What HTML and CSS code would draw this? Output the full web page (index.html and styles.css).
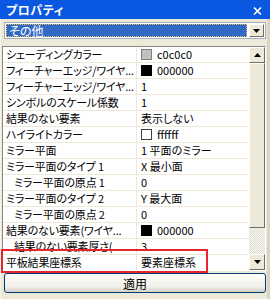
FILE: index.html
```html
<!DOCTYPE html>
<html lang="ja">
<head>
  <meta charset="UTF-8">
  <title>プロパティ</title>
  <link rel="stylesheet" href="styles.css">
</head>
<body>

  <div class="window">
    <!-- タイトルバー -->
    <div class="titlebar">
      <span class="title">プロパティ</span>
      <span class="close">
        <svg width="9" height="8" viewBox="0 0 9 8"><path d="M1 0.5 L8 7.5 M8 0.5 L1 7.5" stroke="#fff" stroke-width="1.6"/></svg>
      </span>
    </div>

    <!-- カテゴリ選択 -->
    <div class="combo">
      <div class="combo-field"><span>その他</span></div>
      <div class="combo-btn">
        <svg width="7" height="4" viewBox="0 0 7 4"><path d="M0 0 H7 L3.5 4 Z" fill="#000"/></svg>
      </div>
    </div>

    <!-- プロパティ一覧 -->
    <div class="grid-box">
      <div class="rows">
        <div class="row"><div class="name">シェーディングカラー</div><div class="value"><i class="swatch silver"></i>c0c0c0</div></div>
        <div class="row"><div class="name">フィーチャーエッジ/ワイヤ...</div><div class="value"><i class="swatch black"></i>000000</div></div>
        <div class="row"><div class="name">フィーチャーエッジ/ワイヤ...</div><div class="value">1</div></div>
        <div class="row"><div class="name">シンボルのスケール係数</div><div class="value">1</div></div>
        <div class="row"><div class="name">結果のない要素</div><div class="value">表示しない</div></div>
        <div class="row"><div class="name">ハイライトカラー</div><div class="value"><i class="swatch white"></i>ffffff</div></div>
        <div class="row"><div class="name">ミラー平面</div><div class="value">1 平面のミラー</div></div>
        <div class="row"><div class="name">ミラー平面のタイプ 1</div><div class="value">X 最小面</div></div>
        <div class="row"><div class="name sub">ミラー平面の原点 1</div><div class="value">0</div></div>
        <div class="row"><div class="name">ミラー平面のタイプ 2</div><div class="value">Y 最大面</div></div>
        <div class="row"><div class="name sub">ミラー平面の原点 2</div><div class="value">0</div></div>
        <div class="row"><div class="name">結果のない要素(ワイヤ...</div><div class="value"><i class="swatch black"></i>000000</div></div>
        <div class="row"><div class="name sub">結果のない要素厚さ(</div><div class="value">3</div></div>
        <div class="row"><div class="name">平板結果座標系</div><div class="value">要素座標系</div></div>
      </div>

      <div class="vscroll">
        <div class="sb-btn">
          <svg width="7" height="4" viewBox="0 0 7 4"><path d="M0 4 H7 L3.5 0 Z" fill="#000"/></svg>
        </div>
        <div class="sb-thumb"></div>
        <div class="sb-track"></div>
        <div class="sb-btn">
          <svg width="7" height="4" viewBox="0 0 7 4"><path d="M0 0 H7 L3.5 4 Z" fill="#000"/></svg>
        </div>
      </div>
    </div>

    <div class="apply-row">
      <button class="apply">適用</button>
    </div>

    <!-- 注目枠 -->
    <div class="highlight"></div>
  </div>

</body>
</html>
```

FILE: styles.css
```css
body {
  margin: 0;
  font-family: "Noto Sans CJK JP", "Noto Sans", sans-serif;
  font-size: 11px;
  font-feature-settings: "palt";
  color: #000;
  background: #ece9d8;
}

.window {
  position: relative;
  width: 270px;
  height: 299px;
  box-sizing: border-box;
  background: #ece9d8;
  border-left: 1px solid #f4f3ee;
  border-right: 3px solid #d8d4c4;
  display: flex;
  flex-direction: column;
}

.titlebar {
  height: 19px;
  margin-left: -1px;
  margin-right: -3px;
  background: #0a58e2;
  color: #fff;
  display: flex;
  align-items: center;
  justify-content: space-between;
  padding: 0 6px 0 6px;
}

.title {
  font-weight: bold;
  font-size: 12px;
  letter-spacing: 0.5px;
}

.close {
  display: flex;
  margin-right: 2px;
  margin-top: 2px;
}

.combo {
  margin: 3px 1px 0 3px;
  height: 17px;
  display: flex;
  background: #fff;
  border: 1px solid #a5acb5;
  box-sizing: border-box;
  padding: 1px;
}

.combo-field {
  flex: 1;
  background: #316ac5;
  border: 1px dotted #e8c060;
  color: #fff;
  display: flex;
  align-items: center;
  padding-left: 2px;
  font-size: 12px;
}

.combo-btn {
  width: 15px;
  margin-left: 2px;
  background: #ece9d8;
  border: 1px solid;
  border-color: #fff #716f64 #716f64 #fff;
  box-sizing: border-box;
  display: flex;
  align-items: center;
  justify-content: center;
}

.grid-box {
  margin: 7px 1px 0 1px;
  height: 225px;
  box-sizing: border-box;
  border: 1px solid #8c8a80;
  border-right-color: #fff;
  border-bottom-color: #fff;
  background: #fff;
  display: flex;
  overflow: hidden;
}

.rows {
  flex: 1;
  overflow: hidden;
}

.row {
  display: flex;
  height: 15px;
  border-bottom: 1px solid #ece9d8;
  line-height: 15px;
  white-space: nowrap;
}

.name {
  width: 130px;
  padding-left: 3px;
  border-right: 1px solid #ece9d8;
  overflow: hidden;
  letter-spacing: -0.2px;
}

.name.sub {
  padding-left: 11px;
  width: 122px;
}

.value {
  flex: 1;
  padding-left: 4px;
  display: flex;
  align-items: center;
}

.swatch {
  width: 9px;
  height: 9px;
  border: 1px solid #000;
  margin-right: 5px;
}

.swatch.silver { background: #c0c0c0; border-color: #808080; }
.swatch.black { background: #000; }
.swatch.white { background: #fff; border-color: #404040; }

.vscroll {
  width: 16px;
  display: flex;
  flex-direction: column;
  background: #ece9d8;
}

.sb-btn {
  height: 16px;
  background: #ece9d8;
  border: 1px solid;
  border-color: #fff #716f64 #716f64 #fff;
  box-sizing: border-box;
  display: flex;
  align-items: center;
  justify-content: center;
}

.sb-thumb {
  height: 165px;
  background: #ece9d8;
  border: 1px solid;
  border-color: #fff #716f64 #716f64 #fff;
  box-sizing: border-box;
}

.sb-track {
  flex: 1;
  background-color: #f4f3ee;
  background-image: repeating-conic-gradient(#e2dfd2 0 25%, #f7f6f1 0 50%);
  background-size: 2px 2px;
}

.apply-row {
  padding: 2px 1px 0 3px;
}

.apply {
  width: 100%;
  height: 20px;
  border: 1px solid #003c74;
  border-radius: 3px;
  background: linear-gradient(#ffffff, #f0efe8 70%, #d6d0c5);
  font-family: "Noto Sans CJK JP", sans-serif;
  font-size: 12px;
  color: #000;
  padding: 0;
}

.highlight {
  position: absolute;
  left: 0;
  top: 249px;
  width: 207px;
  height: 24px;
  box-sizing: border-box;
  border: 2px solid #e8252c;
}
```
